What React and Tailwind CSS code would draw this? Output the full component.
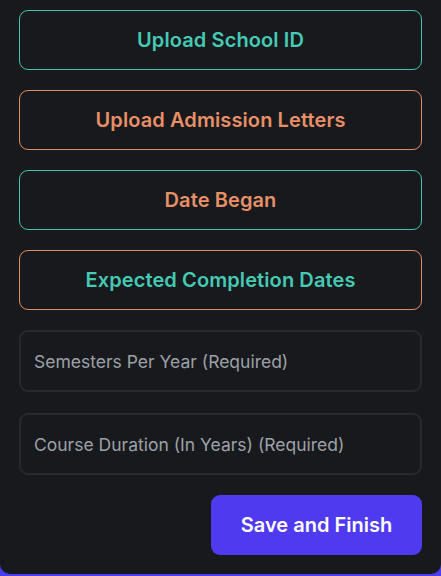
import React from 'react';

const uploads = [
  { label: 'Upload School ID', border: 'border-[#3cc4ae]', text: 'text-[#45c9b4]' },
  { label: 'Upload Admission Letters', border: 'border-[#e08a63]', text: 'text-[#e88f67]' },
  { label: 'Date Began', border: 'border-[#3cc4ae]', text: 'text-[#e88f67]' },
  { label: 'Expected Completion Dates', border: 'border-[#e08a63]', text: 'text-[#45c9b4]' },
];

const fields = ['Semesters Per Year (Required)', 'Course Duration (In Years) (Required)'];

export default function App() {
  return (
    <div className="w-[441px] h-[576px] bg-[#4a3cf0] overflow-hidden" style={{ fontFamily: 'Inter, "Noto Sans", sans-serif' }}>
      <div className="h-[574px] bg-[#17191d] rounded-b-[10px] px-[19px] pt-[10px] flex flex-col">
        <div className="flex flex-col gap-5">
          {uploads.map((u) => (
            <button
              key={u.label}
              className={`h-[60px] w-full rounded-[9px] border-[1.5px] ${u.border} ${u.text} text-[20px] font-semibold tracking-[0.1px]`}
            >
              {u.label}
            </button>
          ))}
        </div>

        <div className="flex flex-col gap-[21px] mt-5">
          {fields.map((f) => (
            <input
              key={f}
              placeholder={f}
              className="h-[62px] w-full rounded-[9px] border-2 border-[#26292e] bg-transparent px-[13px] text-[17.5px] text-gray-200 placeholder:text-[#9da1a7] outline-none"
            />
          ))}
        </div>

        <div className="flex justify-end mt-5">
          <button className="h-[60px] w-[211px] rounded-[9px] bg-[#4f3af0] text-white text-[20px] font-semibold">
            Save and Finish
          </button>
        </div>
      </div>
    </div>
  );
}
